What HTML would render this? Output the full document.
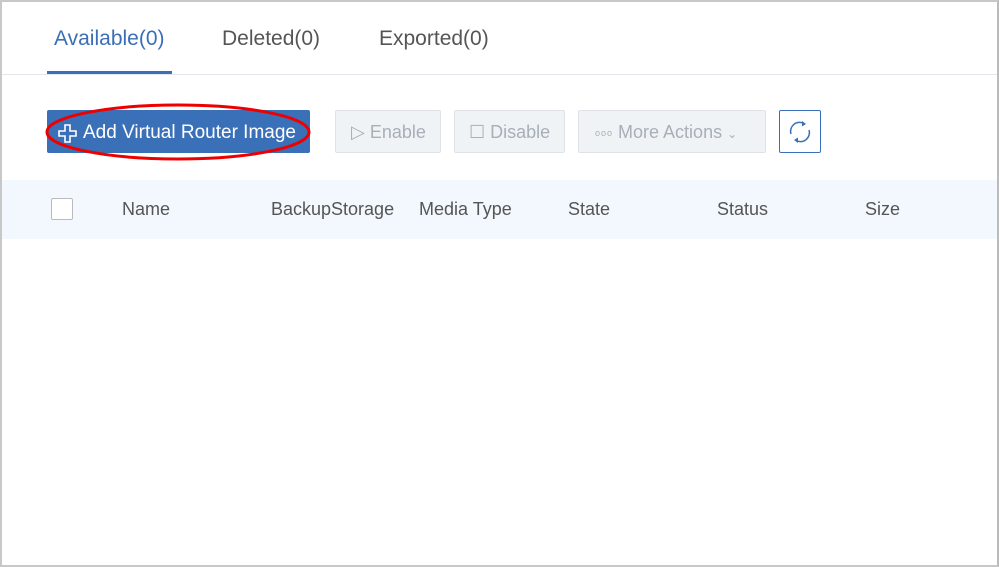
<!DOCTYPE html>
<html><head><style>
*{box-sizing:border-box;margin:0;padding:0}
body{width:999px;height:567px;background:#fff;font-family:"Liberation Sans",sans-serif;position:relative;overflow:hidden}
.frame{position:absolute;left:0;top:0;width:999px;height:567px;border:2px solid #c8c8c8;border-right-color:#bbb}
.tab{position:absolute;top:27px;font-size:21px;color:#555}
.line{position:absolute;left:2px;right:2px;top:74px;height:1px;background:#e3e6ea}
.ul{position:absolute;left:47px;top:71px;width:125px;height:3px;background:#3a6fb7}
.btn{position:absolute;top:110px;height:43px;border:1px solid #dfe3e8;background:#f0f3f6;border-radius:2px;color:#a8afb8;font-size:18px;line-height:43px;padding-left:14px}
.hdr{position:absolute;left:2px;right:2px;top:180px;height:59px;background:#f2f8fd}
.h{position:absolute;top:199px;font-size:18px;color:#555}
</style></head><body>
<div class="frame"></div>
<div class="tab" style="left:54px;color:#3a6fb7">Available(0)</div>
<div class="tab" style="left:222px">Deleted(0)</div>
<div class="tab" style="left:379px">Exported(0)</div>
<div class="line"></div><div class="ul"></div>
<div style="position:absolute;left:47px;top:110px;width:263px;height:43px;background:#3a70b8;border-radius:2px;color:#fff;font-size:19px;line-height:45px;padding-left:36px">Add Virtual Router Image</div>
<svg style="position:absolute;left:55px;top:121px" width="26" height="24"><path d="M10 4h5v6h6v5h-6v6h-5v-6H4v-5h6z" fill="none" stroke="#fff" stroke-width="1.6"/></svg>
<svg style="position:absolute;left:40px;top:100px" width="280" height="64"><ellipse cx="138" cy="32" rx="131" ry="27" fill="none" stroke="#e00" stroke-width="3"/></svg>
<div class="btn" style="left:335px;width:106px;padding-left:15px">▷ Enable</div>
<div class="btn" style="left:454px;width:111px">☐ Disable</div>
<div class="btn" style="left:578px;width:188px;padding-left:16px"><span style="font-size:9px;letter-spacing:1px;vertical-align:2px">ooo</span> More Actions <span style="font-size:12px">⌄</span></div>
<div style="position:absolute;left:779px;top:110px;width:42px;height:43px;border:1px solid #3a70b8;border-radius:2px"></div>
<svg style="position:absolute;left:786px;top:118px" width="28" height="28"><path d="M5 16A9 9 0 0 1 18 5.5M23 12A9 9 0 0 1 10 22.5" fill="none" stroke="#3a70b8" stroke-width="1.5"/><path d="M16 3l4 3-4 2.5zM12 25l-4-3 4-2.5z" fill="#3a70b8"/></svg>
<div class="hdr"></div>
<div style="position:absolute;left:51px;top:198px;width:22px;height:22px;border:1px solid #bbb;border-radius:2px;background:#fff"></div>
<div class="h" style="left:122px">Name</div>
<div class="h" style="left:271px">BackupStorage</div>
<div class="h" style="left:419px">Media Type</div>
<div class="h" style="left:568px">State</div>
<div class="h" style="left:717px">Status</div>
<div class="h" style="left:865px">Size</div>
</body></html>
